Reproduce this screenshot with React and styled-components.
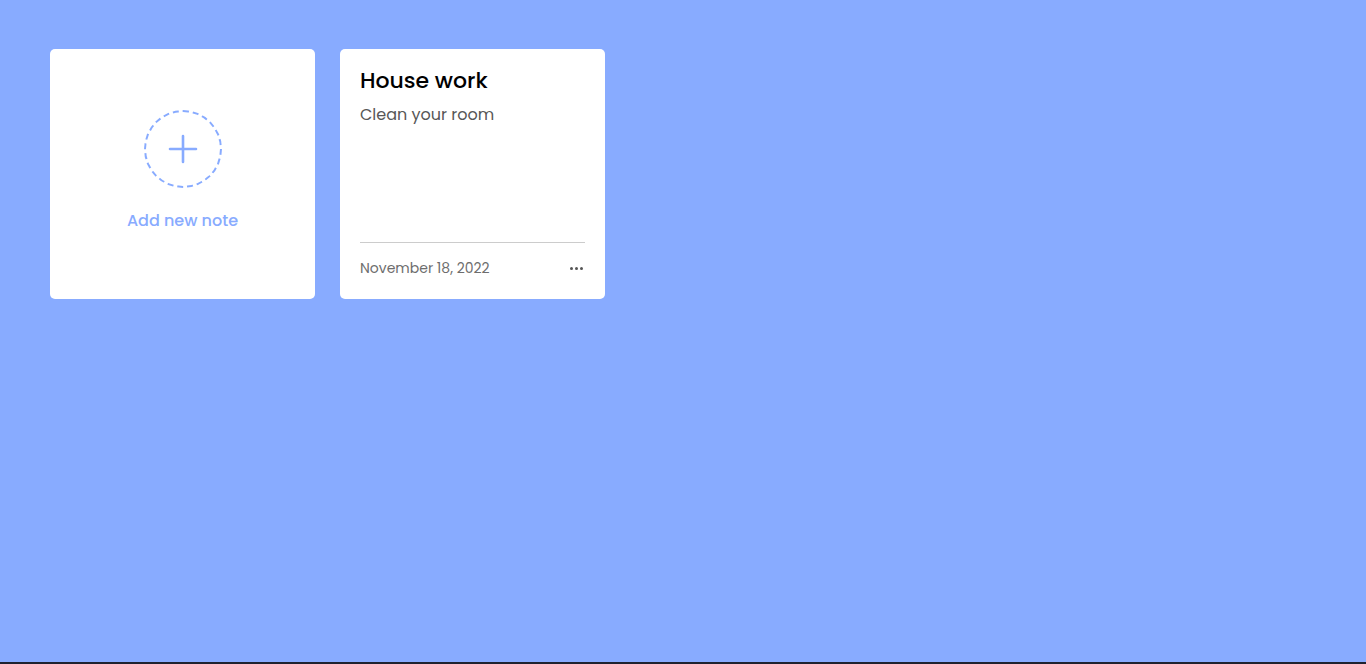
import React from 'react'
import styled, { createGlobalStyle } from 'styled-components'

const GlobalStyle = createGlobalStyle`
  * { box-sizing: border-box; }
  html, body {
    margin: 0;
    padding: 0;
    height: 100%;
    background: #88abff;
    font-family: "Poppins", Inter, "Open Sans", "Liberation Sans", sans-serif;
  }
  #root { min-height: 100vh; }
`

const Page = styled.div`
  min-height: 100vh;
  background: #88abff;
  border-bottom: 2px solid #1f2230;
`

const Wrapper = styled.ul`
  list-style: none;
  margin: 0;
  padding: 49px 50px;
  display: grid;
  grid-template-columns: repeat(auto-fill, 265px);
  gap: 25px;
`

const Card = styled.li`
  height: 250px;
  background: #fff;
  border-radius: 5px;
  padding: 16px 20px 20px;
  display: flex;
  flex-direction: column;
`

const AddCard = styled(Card)`
  align-items: center;
  justify-content: center;
  cursor: pointer;
  padding: 0 0 5px;
`

const Circle = styled.div`
  width: 78px;
  height: 78px;
  border-radius: 50%;
  border: 2px dashed #88abff;
  display: flex;
  align-items: center;
  justify-content: center;
`

const AddLabel = styled.p`
  margin: 20px 0 0;
  color: #88abff;
  font-size: 16px;
  font-weight: 500;
`

const Details = styled.div`
  flex: 1;
`

const Title = styled.p`
  margin: 0;
  font-size: 22px;
  font-weight: 500;
  color: #000;
  line-height: 32px;
`

const Body = styled.span`
  display: block;
  margin-top: 7px;
  font-size: 16px;
  color: #575757;
  line-height: 22px;
`

const Bottom = styled.div`
  border-top: 1px solid #ccc;
  padding-top: 15px;
  display: flex;
  justify-content: space-between;
  align-items: center;
`

const Date = styled.span`
  font-size: 14px;
  color: #6d6d6d;
`

const Dots = styled.span`
  display: flex;
  gap: 2px;
  margin-right: 2px;
  & i {
    width: 3px;
    height: 3px;
    border-radius: 50%;
    background: #555;
  }
`

export default function App() {
  return (
    <Page>
      <GlobalStyle />
      <Wrapper>
        <AddCard>
          <Circle>
            <svg width="30" height="30" viewBox="0 0 30 30" fill="none">
              <path d="M15 2v26M2 15h26" stroke="#88abff" strokeWidth="2.6" strokeLinecap="round" />
            </svg>
          </Circle>
          <AddLabel>Add new note</AddLabel>
        </AddCard>
        <Card>
          <Details>
            <Title>House work</Title>
            <Body>Clean your room</Body>
          </Details>
          <Bottom>
            <Date>November 18, 2022</Date>
            <Dots><i /><i /><i /></Dots>
          </Bottom>
        </Card>
      </Wrapper>
    </Page>
  )
}
